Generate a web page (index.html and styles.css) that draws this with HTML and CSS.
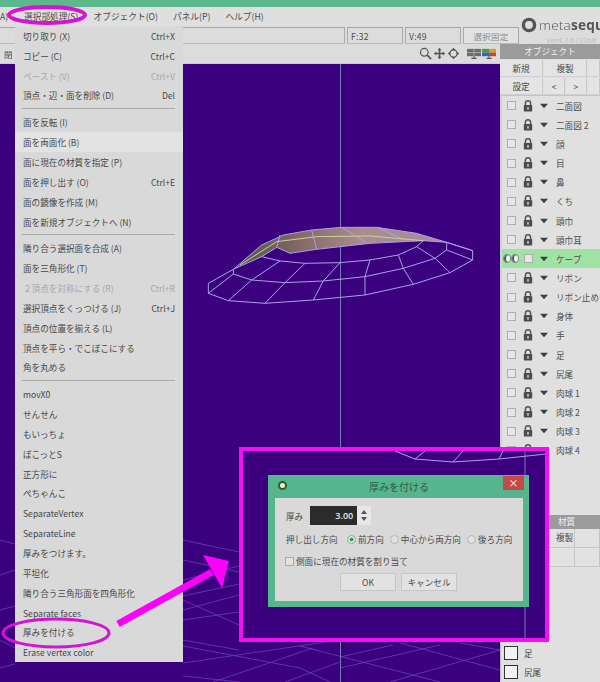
FILE: index.html
```html
<!DOCTYPE html>
<html lang="ja">
<head>
<meta charset="utf-8">
<title>Metasequoia</title>
<link rel="stylesheet" href="styles.css">
</head>
<body>
<svg class="sprites" width="0" height="0">
  <symbol id="lock" viewBox="0 0 10 12">
    <path d="M2.4 5V3.4a2.6 2.6 0 0 1 5.2 0V5" fill="none" stroke="#555" stroke-width="1.5"/>
    <rect x="0.8" y="5" width="8.4" height="6.6" rx="0.8" fill="#4c4c4c"/>
    <rect x="4.3" y="7" width="1.4" height="2.6" fill="#ddd"/>
  </symbol>
  <symbol id="tri" viewBox="0 0 9 6"><path d="M0 0.5h9L4.5 5.5z" fill="#3f3f3f"/></symbol>
</svg>
<div class="app">
  <div class="titlebar"></div>
  <div class="menubar">
    <span class="mb mb-a">A)</span>
    <span class="mb mb-sel">選択部処理(S)</span>
    <span class="mb">オブジェクト(O)</span>
    <span class="mb">パネル(P)</span>
    <span class="mb">ヘルプ(H)</span>
  </div>
  <div class="toolbar">
    <div class="tb-cell tb-wide"></div>
    <div class="tb-cell tb-f">F:32</div>
    <div class="tb-cell tb-f">V:49</div>
    <div class="tb-cell tb-btn">選択固定</div>
    <div class="logo">
      <svg class="logo-ring" viewBox="0 0 16 16"><circle cx="8" cy="8" r="5.6" fill="none" stroke="#555" stroke-width="3.4"/></svg>
      <span class="logo-text">meta<b>sequ</b></span>
      <span class="logo-ver">Ver4.7.6 (32bit</span>
    </div>
  </div>
  <div class="main">
    <div class="work">
      <div class="subbar">
        <span class="subbar-text">閉</span>
        <div class="view-icons">
          <svg class="vi" viewBox="0 0 16 16"><circle cx="6.5" cy="6.5" r="4.7" fill="none" stroke="#555" stroke-width="1.5"/><path d="M10 10l5 5" stroke="#555" stroke-width="2"/></svg>
          <svg class="vi" viewBox="0 0 16 16"><path d="M8 1l2.4 3H9v3h3V5.600L15 8l-3 2.400V9H9v3h1.400L8 15l-2.400-3H7V9H4v1.400L1 8l3-2.400V7h3V4H5.600z" fill="#555"/></svg>
          <svg class="vi" viewBox="0 0 16 16"><path d="M8 1l2.600 3H5.400zM8 15l-2.600-3h5.200zM1 8l3-2.600v5.200zM15 8l-3 2.600V5.400z" fill="#555"/><circle cx="8" cy="8" r="4.500" fill="none" stroke="#555" stroke-width="1.400"/></svg>
          <span class="vi-gap"></span>
          <svg class="vi-m" viewBox="0 0 19 14"><rect width="19" height="10" fill="#6c6c6c"/><path d="M9.500 0v10M0 5h19" stroke="#ccc" stroke-width=".8"/><path d="M6 13h7M9.500 10v3" stroke="#555" stroke-width="1.500"/></svg>
          <svg class="vi-m" viewBox="0 0 19 14"><rect width="9.500" height="5" fill="#4a9a4a"/><rect x="9.500" width="9.500" height="5" fill="#c9a52c"/><rect y="5" width="9.500" height="5" fill="#3c62b8"/><rect x="9.500" y="5" width="9.500" height="5" fill="#c8452f"/><path d="M6 13h7M9.500 10v3" stroke="#555" stroke-width="1.500"/></svg>
        </div>
      </div>
      <div class="stage">
        <svg class="scene" viewBox="0 64 500 618" preserveAspectRatio="none">
          <defs>
            <linearGradient id="skin" x1="0" x2="1" y1="0" y2="0">
              <stop offset="0" stop-color="#4f5a45"/><stop offset=".25" stop-color="#7b625f"/><stop offset=".6" stop-color="#ad8c8c"/><stop offset="1" stop-color="#a58d96"/>
            </linearGradient>
          </defs>
          <g class="grid">
            <path d="M183 540L239 552M183 560L239 572M183 580L239 566M183 596L239 584M183 610L239 595M183 620L239 612M183 640L239 650M183 600L239 625"/>
            <path d="M183 663L340 640M213 682L313 648M285 682L340 662M340 657L393 645M340 668L440 645M390 682L500 650M183 646L300 668 330 682M300 646L440 682M400 643L500 670M183 676L240 682M460 643L500 650M0 540L15 544M0 575L15 570M0 610L15 606M0 640L15 648M0 668L15 664"/>
          </g>
          <path class="axis" d="M340.500 64V682"/>
          <g transform="translate(190 200) scale(.3333)">
            <path fill="url(#skin)" d="M130 208L215 135 280 105 365 90 455 82 560 82 680 100 770 127 700 122 540 130 380 148 300 160 260 142 215 170z"/>
            <path class="wire" d="M55 250L130 208 215 135 280 105 365 90 455 82 560 82 680 100 770 127 848 152 848 180 780 218 670 253 525 285 370 300 225 310 115 302 55 280z"/>
            <path class="wire" d="M130 222L185 240 285 248 400 243 525 230 640 205 735 175 770 150 770 127M130 208L215 170 260 142 300 160 380 148 540 130 700 122 770 127M215 170L270 183 345 190 450 188 540 180 625 165 680 140 700 122"/>
            <path class="wire" d="M55 280L130 222 130 208M115 302L185 240 270 183M225 310L285 248 345 190M370 300L400 243 450 188M525 285L525 230 540 180M670 253L640 205 625 165M780 218L735 175 680 140M848 180L770 150M848 152L770 127M270 105L260 142M365 90L380 148M455 82L530 128M560 82L640 118"/>
            <path class="wire-thin" d="M150 195L260 125 380 110 540 108 700 122"/>
          </g>
        </svg>
        <div class="frame">
          <svg class="frame-scene" viewBox="0 0 302 187" preserveAspectRatio="none">
            <path class="axis" d="M282 0V187"/>
            <path class="wire" d="M152 0L172 8 210 11 256 8 303 3M172 8L182 0M210 11L220 0M256 8L260 0"/>
          </svg>
          <div class="dialog">
            <div class="dlg-title">
              <span class="dlg-icon"></span>
              <span class="dlg-name">厚みを付ける</span>
              <span class="dlg-close">×</span>
            </div>
            <div class="dlg-body">
              <div class="dlg-row">
                <span>厚み</span>
                <span class="spin-val">3.00</span>
                <span class="spin-btns"><span class="spin-up"></span><span class="spin-down"></span></span>
              </div>
              <div class="dlg-row dlg-radio-row">
                <span class="dlg-label">押し出し方向</span>
                <span class="radio radio-on"></span><span class="r-text">前方向</span>
                <span class="radio"></span><span class="r-text">中心から両方向</span>
                <span class="radio"></span><span>後ろ方向</span>
              </div>
              <div class="dlg-row dlg-check-row">
                <span class="dlg-check"></span><span>側面に現在の材質を割り当て</span>
              </div>
              <div class="dlg-actions">
                <span class="dlg-btn">OK</span>
                <span class="dlg-btn">キャンセル</span>
              </div>
            </div>
          </div>
        </div>
      </div>
    </div>
    <aside class="side">
      <div class="panel-head">オブジェクト</div>
      <div class="btn-row"><span class="pbtn pbtn-w">新規</span><span class="pbtn pbtn-w">複製</span><span class="pbtn pbtn-r"></span></div>
      <div class="btn-row"><span class="pbtn pbtn-w">設定</span><span class="pbtn pbtn-n">&lt;</span><span class="pbtn pbtn-n">&gt;</span><span class="pbtn pbtn-r"></span></div>
      <ul class="objs">
        <li class="obj"><span class="cb"></span><svg class="lk"><use href="#lock"/></svg><svg class="tr"><use href="#tri"/></svg><span>二面図</span></li>
        <li class="obj"><span class="cb"></span><svg class="lk"><use href="#lock"/></svg><svg class="tr"><use href="#tri"/></svg><span>二面図 2</span></li>
        <li class="obj"><span class="cb"></span><svg class="lk"><use href="#lock"/></svg><svg class="tr"><use href="#tri"/></svg><span>顔</span></li>
        <li class="obj"><span class="cb"></span><svg class="lk"><use href="#lock"/></svg><svg class="tr"><use href="#tri"/></svg><span>目</span></li>
        <li class="obj"><span class="cb"></span><svg class="lk"><use href="#lock"/></svg><svg class="tr"><use href="#tri"/></svg><span>鼻</span></li>
        <li class="obj"><span class="cb"></span><svg class="lk"><use href="#lock"/></svg><svg class="tr"><use href="#tri"/></svg><span>くち</span></li>
        <li class="obj"><span class="cb"></span><svg class="lk"><use href="#lock"/></svg><svg class="tr"><use href="#tri"/></svg><span>頭巾</span></li>
        <li class="obj"><span class="cb"></span><svg class="lk"><use href="#lock"/></svg><svg class="tr"><use href="#tri"/></svg><span>頭巾耳</span></li>
        <li class="obj obj-on"><span class="eye"><i></i><i></i></span><span class="cb"></span><svg class="tr"><use href="#tri"/></svg><span>ケープ</span></li>
        <li class="obj"><span class="cb"></span><svg class="lk"><use href="#lock"/></svg><svg class="tr"><use href="#tri"/></svg><span>リボン</span></li>
        <li class="obj"><span class="cb"></span><svg class="lk"><use href="#lock"/></svg><svg class="tr"><use href="#tri"/></svg><span>リボン止め</span></li>
        <li class="obj"><span class="cb"></span><svg class="lk"><use href="#lock"/></svg><svg class="tr"><use href="#tri"/></svg><span>身体</span></li>
        <li class="obj"><span class="cb"></span><svg class="lk"><use href="#lock"/></svg><svg class="tr"><use href="#tri"/></svg><span>手</span></li>
        <li class="obj"><span class="cb"></span><svg class="lk"><use href="#lock"/></svg><svg class="tr"><use href="#tri"/></svg><span>足</span></li>
        <li class="obj"><span class="cb"></span><svg class="lk"><use href="#lock"/></svg><svg class="tr"><use href="#tri"/></svg><span>尻尾</span></li>
        <li class="obj"><span class="cb"></span><svg class="lk"><use href="#lock"/></svg><svg class="tr"><use href="#tri"/></svg><span>肉球 1</span></li>
        <li class="obj"><span class="cb"></span><svg class="lk"><use href="#lock"/></svg><svg class="tr"><use href="#tri"/></svg><span>肉球 2</span></li>
        <li class="obj"><span class="cb"></span><svg class="lk"><use href="#lock"/></svg><svg class="tr"><use href="#tri"/></svg><span>肉球 3</span></li>
        <li class="obj"><span class="cb"></span><svg class="lk"><use href="#lock"/></svg><svg class="tr"><use href="#tri"/></svg><span>肉球 4</span></li>
      </ul>
      <div class="mat-head"><span>材質</span></div>
      <div class="mat-btns"><span class="mbtn">複製</span><span class="mbtn"></span></div>
      <div class="mat-btns mat-btns2"><span class="mbtn"></span><span class="mbtn"></span></div>
      <ul class="mats">
        <li class="mat"><span class="mat-sw"></span><span>足</span></li>
        <li class="mat"><span class="mat-sw"></span><span>尻尾</span></li>
      </ul>
    </aside>
  </div>
  <div class="menu">
    <div class="mi"><span>切り取り (X)</span><span>Ctrl+X</span></div>
    <div class="mi"><span>コピー (C)</span><span>Ctrl+C</span></div>
    <div class="mi mi-off"><span>ペースト (V)</span><span>Ctrl+V</span></div>
    <div class="mi"><span>頂点・辺・面を削除 (D)</span><span>Del</span></div>
    <div class="sep"></div>
    <div class="mi"><span>面を反転 (I)</span></div>
    <div class="mi mi-hover"><span>面を両面化 (B)</span></div>
    <div class="mi"><span>面に現在の材質を指定 (P)</span></div>
    <div class="mi"><span>面を押し出す (O)</span><span>Ctrl+E</span></div>
    <div class="mi"><span>面の鏡像を作成 (M)</span></div>
    <div class="mi"><span>面を新規オブジェクトへ (N)</span></div>
    <div class="sep"></div>
    <div class="mi"><span>隣り合う選択面を合成 (A)</span></div>
    <div class="mi"><span>面を三角形化 (T)</span></div>
    <div class="mi mi-off"><span>２頂点を対称にする (R)</span><span>Ctrl+R</span></div>
    <div class="mi"><span>選択頂点をくっつける (J)</span><span>Ctrl+J</span></div>
    <div class="mi"><span>頂点の位置を揃える (L)</span></div>
    <div class="mi"><span>頂点を平ら・でこぼこにする</span></div>
    <div class="mi"><span>角を丸める</span></div>
    <div class="sep"></div>
    <div class="mi"><span>movX0</span></div>
    <div class="mi"><span>せんせん</span></div>
    <div class="mi"><span>もいっちょ</span></div>
    <div class="mi"><span>ぼこっとS</span></div>
    <div class="mi"><span>正方形に</span></div>
    <div class="mi"><span>ぺちゃんこ</span></div>
    <div class="mi"><span>SeparateVertex</span></div>
    <div class="mi"><span>SeparateLine</span></div>
    <div class="mi"><span>厚みをつけます。</span></div>
    <div class="mi"><span>平坦化</span></div>
    <div class="mi"><span>隣り合う三角形面を四角形化</span></div>
    <div class="mi"><span>Separate faces</span></div>
    <div class="mi"><span>厚みを付ける</span></div>
    <div class="mi"><span>Erase vertex color</span></div>
  </div>
  <svg class="marks" viewBox="0 0 600 682">
    <ellipse class="mark-line mark-top" cx="47" cy="15" rx="38" ry="8"/>
    <ellipse class="mark-line" cx="56" cy="633" rx="53" ry="14"/>
    <path class="mark-arrow" d="M118 624L212 572"/>
    <path class="mark-head" d="M203 555L229 561 222 588z"/>
  </svg>
</div>
</body>
</html>
```
FILE: styles.css
```css
* { box-sizing: border-box; }
html, body { margin: 0; padding: 0; }
body {
  width: 600px; height: 682px; overflow: hidden;
  font-family: "Noto Sans CJK JP", "Noto Sans", sans-serif;
  font-size: 8.6px; color: #4a4a4a; background: #dcdcdc;
}
ul { list-style: none; margin: 0; padding: 0; }
.sprites { position: absolute; }
.app { position: relative; width: 600px; height: 682px; display: flex; flex-direction: column; overflow: hidden; filter: blur(.25px); }
.titlebar { height: 7px; background: #5cb98e; flex: none; }
.menubar { height: 19px; flex: none; display: flex; align-items: center; gap: 15px; background: #dfdfdf; font-size: 8.7px; white-space: nowrap; }
.mb-a { width: 9px; }
.toolbar { height: 18px; flex: none; display: flex; gap: 2px; position: relative; background: #dcdcdc; padding-top: 1px; }
.tb-cell { border: 1px solid #a9a9a9; border-bottom-color: #bbb; background: #dcdcdc; display: flex; align-items: center; padding-left: 3px; font-size: 8.5px; letter-spacing: .3px; }
.tb-wide { width: 345px; border-left: 0; }
.tb-f { width: 56px; }
.tb-btn { width: 56px; justify-content: center; padding: 0; color: #8a8a8a; background: #e2e2e2; }
.logo { position: absolute; left: 521px; top: -10px; width: 79px; height: 30px; display: grid; grid-template-columns: 16px 1fr; }
.logo-ring { width: 16px; height: 16px; margin-top: 1px; }
.logo-text { font-family: "Open Sans", sans-serif; font-size: 13.6px; line-height: 18px; color: #555; white-space: nowrap; font-weight: 300; letter-spacing: .2px; margin-left: 2px; }
.logo-text b { font-weight: 700; }
.logo-ver { grid-column: 2; font-family: "Open Sans", sans-serif; font-size: 7.5px; line-height: 10px; color: #bbb; white-space: nowrap; margin-left: 9px; }
.main { flex: 1; display: flex; min-height: 0; }
.work { width: 500px; display: flex; flex-direction: column; position: relative; z-index: 1; flex: none; }
.subbar { height: 20px; flex: none; display: flex; align-items: center; justify-content: space-between; padding-right: 4px; border-bottom: 1px solid #cfc6e2; }
.subbar-text { font-size: 8.5px; padding-left: 4px; }
.view-icons { display: flex; align-items: center; gap: 1px; }
.vi { width: 13px; height: 13px; }
.vi-gap { width: 5px; }
.vi-m { width: 14px; height: 12px; }
.stage { flex: 1; position: relative; background: #3a007e; }
.scene { width: 100%; height: 100%; display: block; }
.grid { stroke: #6444b4; stroke-width: .8; fill: none; }
.axis { stroke: #6f7db4; stroke-width: 1; fill: none; }
.wire { stroke: #a8a2ea; stroke-width: 1; fill: none; vector-effect: non-scaling-stroke; }
.wire-thin { stroke: #c8d0a8; stroke-width: 1; fill: none; vector-effect: non-scaling-stroke; }
.frame { position: absolute; left: 239px; top: 383px; width: 310px; height: 195px; border: 4px solid #f010f0; background: #3a007e; overflow: hidden; }
.frame-scene { position: absolute; inset: 0; width: 100%; height: 100%; }
.dialog { position: absolute; left: 25px; top: 24px; width: 261px; height: 132px; background: #55b58c; padding: 0 6px 6px 7px; display: flex; flex-direction: column; }
.dlg-title { height: 23px; flex: none; display: flex; align-items: center; position: relative; justify-content: center; font-size: 10px; color: #2c5c48; }
.dlg-icon { position: absolute; left: 3px; top: 6px; width: 9px; height: 9px; border-radius: 50%; background: #e8f0d8; border: 2.5px solid #3c5a20; }
.dlg-close { position: absolute; right: -1px; top: 1px; width: 21px; height: 14px; background: #c24a48; color: #fff; font-size: 10px; line-height: 13px; text-align: center; }
.dlg-body { flex: 1; background: #d9d9d9; padding: 8px 10px 0 11px; display: flex; flex-direction: column; font-size: 8.6px; white-space: nowrap; }
.dlg-row { display: flex; align-items: center; }
.spin-val { width: 47px; height: 19px; margin-left: 7px; background: #2b2b2b; color: #e8e8e8; text-align: right; padding-right: 4px; line-height: 19px; font-family: "Open Sans", sans-serif; font-size: 9px; font-weight: 600; }
.spin-btns { width: 14px; height: 19px; background: #e8e8e8; display: flex; flex-direction: column; justify-content: space-evenly; align-items: center; }
.spin-up { border: 3px solid transparent; border-top: 0; border-bottom: 4px solid #555; }
.spin-down { border: 3px solid transparent; border-bottom: 0; border-top: 4px solid #555; }
.dlg-radio-row { margin-top: 7px; height: 14px; }
.dlg-label { width: 61px; }
.radio { width: 9px; height: 9px; border-radius: 50%; border: 1px solid #b4b4b4; background: #e2e2e2; margin-right: 2px; flex: none; }
.radio-on { background: #2f9a6a; box-shadow: inset 0 0 0 1.5px #eee; }
.r-text { margin-right: 6px; }
.dlg-check-row { margin-top: 9px; gap: 2px; margin-left: -1px; }
.dlg-check { width: 9px; height: 9px; border: 1px solid #aaa; background: #e2e2e2; }
.dlg-actions { display: flex; justify-content: center; gap: 5px; margin-top: 6px; margin-right: 2px; }
.dlg-btn { width: 56px; height: 18px; background: #e2e2e2; border: 1px solid #c6c6c6; text-align: center; line-height: 16px; }
.side { width: 100px; flex: none; background: #e0e0e0; position: relative; display: flex; flex-direction: column; }
.panel-head { height: 15px; background: #9b9b9b; color: #eee; text-align: center; line-height: 14px; flex: none; }
.btn-row { display: flex; height: 18px; gap: 1px; flex: none; padding-top: 1px; border-bottom: 1px solid #cfcfcf; }
.pbtn { background: #e4e4e4; border-right: 1px solid #c8c8c8; text-align: center; line-height: 16px; flex: none; }
.pbtn-w { width: 43px; }
.pbtn-n { width: 21px; }
.pbtn-r { flex: 1; }
.objs { flex: none; height: 420px; border-top: 1px solid #c4c4c4; border-left: 2px solid #d0d0d0; }
.obj { height: 19.17px; display: flex; align-items: center; padding-left: 5px; white-space: nowrap; color: #4e4e4e; }
.obj-on { background: #9fe3a4; padding-left: 1px; }
.eye { width: 21px; display: flex; flex: none; }
.eye i { width: 8px; height: 9px; border-radius: 50%; background: #f0f4f0; border: 1px solid #7a8a80; box-shadow: inset 2px 0 0 0 #556; }
.cb { width: 9px; height: 9px; border: 1px solid #aeaeae; background: #e6e6e6; margin-right: 7px; flex: none; }
.lk { width: 10px; height: 12px; margin-right: 7px; flex: none; }
.tr { width: 8px; height: 6px; margin-right: 8px; flex: none; }
.mat-head { height: 14px; padding-left: 50px; background: #9b9b9b; color: #eee; line-height: 13px; flex: none; }
.mat-head span { padding-left: 8px; }
.mat-btns { display: flex; height: 19px; padding-left: 50px; flex: none; border-bottom: 1px solid #c8c8c8; }
.mbtn { width: 37px; background: #e2e2e2; border-right: 1px solid #c4c4c4; line-height: 17px; padding-left: 6px; }
.mats { margin-top: 76px; border-left: 1px solid #bdbdbd; padding-left: 3px; }
.mat { display: flex; align-items: center; gap: 6px; height: 19px; }
.mat-sw { width: 14px; height: 14px; background: #f2f2f2; border: 1.5px solid #333; flex: none; }
.menu { position: absolute; left: 15px; top: 26px; width: 168px; height: 636px; z-index: 2; background: #d9d9d9; padding: 0 8px; }
.mi { height: 19.85px; display: flex; justify-content: space-between; align-items: center; white-space: nowrap; font-size: 8.6px; color: #484848; }
.mi-off { color: #a8a8a8; }
.mi-hover { background: #e3e3e3; margin: 0 -8px; padding: 0 8px; }
.sep { height: 1px; margin: 3px 0 3px -1px; background: #a9a9a9; }
.marks { position: absolute; inset: 0; width: 600px; height: 682px; pointer-events: none; z-index: 3; }
.mark-line { fill: none; stroke: #d414d4; stroke-width: 3; }
.mark-top { stroke-width: 4; }
.mark-arrow { stroke: #fb00fb; stroke-width: 7; fill: none; }
.mark-head { fill: #fb00fb; }
```
